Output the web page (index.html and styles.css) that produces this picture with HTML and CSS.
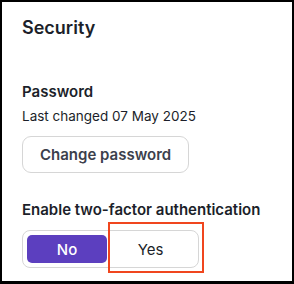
FILE: index.html
```html
<!DOCTYPE html>
<html lang="en">
<head>
    <meta charset="UTF-8">
    <meta name="viewport" content="width=device-width, initial-scale=1.0">
    <title>Security</title>
    <link rel="stylesheet" href="styles.css">
</head>
<body>
    <div class="panel">
        <h2 class="panel-title">Security</h2>

        <div class="field">
            <h3 class="field-label">Password</h3>
            <p class="field-note">Last changed 07 May 2025</p>
            <button class="btn-outline">Change password</button>
        </div>

        <div class="field">
            <h3 class="field-label">Enable two-factor authentication</h3>
            <div class="toggle-group">
                <button class="toggle active">No</button>
                <button class="toggle">Yes</button>
                <div class="highlight"></div>
            </div>
        </div>
    </div>
</body>
</html>
```

FILE: styles.css
```css
* {
    box-sizing: border-box;
}

body {
    margin: 0;
    height: 284px;
    border: 2px solid #000;
    border-bottom-width: 3px;
    background: #fff;
    font-family: Inter, "Noto Sans", sans-serif;
    color: #1c1f2a;
    overflow: hidden;
}

.panel {
    padding: 14px 20px 0 20px;
}

.panel-title {
    margin: 0 0 42px;
    font-size: 18px;
    line-height: 24px;
    font-weight: 600;
}

.field {
    margin-bottom: 27px;
}

.field-label {
    margin: 0 0 5px;
    font-size: 15px;
    line-height: 20px;
    font-weight: 600;
}

.field-note {
    margin: 0 0 11px;
    font-size: 13.5px;
    line-height: 18px;
}

.field .toggle-group {
    margin-top: 10px;
}

.btn-outline {
    height: 37px;
    padding: 0 17px;
    background: #fff;
    border: 1px solid #d6d6d6;
    border-radius: 9px;
    font-family: inherit;
    font-size: 15px;
    font-weight: 600;
    color: #3b404c;
}

.toggle-group {
    position: relative;
    display: flex;
    width: 177px;
    height: 38px;
    padding: 4px;
    border: 1px solid #d6d6d6;
    border-radius: 8px;
}

.toggle {
    flex: 1;
    border: none;
    border-radius: 5px;
    background: transparent;
    font-family: inherit;
    font-size: 15px;
    color: #1c1f2a;
}

.toggle.active {
    flex: 0 0 80px;
    background: #5c3fbf;
    color: #fff;
    font-weight: 500;
}

.highlight {
    position: absolute;
    left: 85px;
    top: -9px;
    width: 96px;
    height: 51px;
    border: 2px solid #f0461e;
}
```
